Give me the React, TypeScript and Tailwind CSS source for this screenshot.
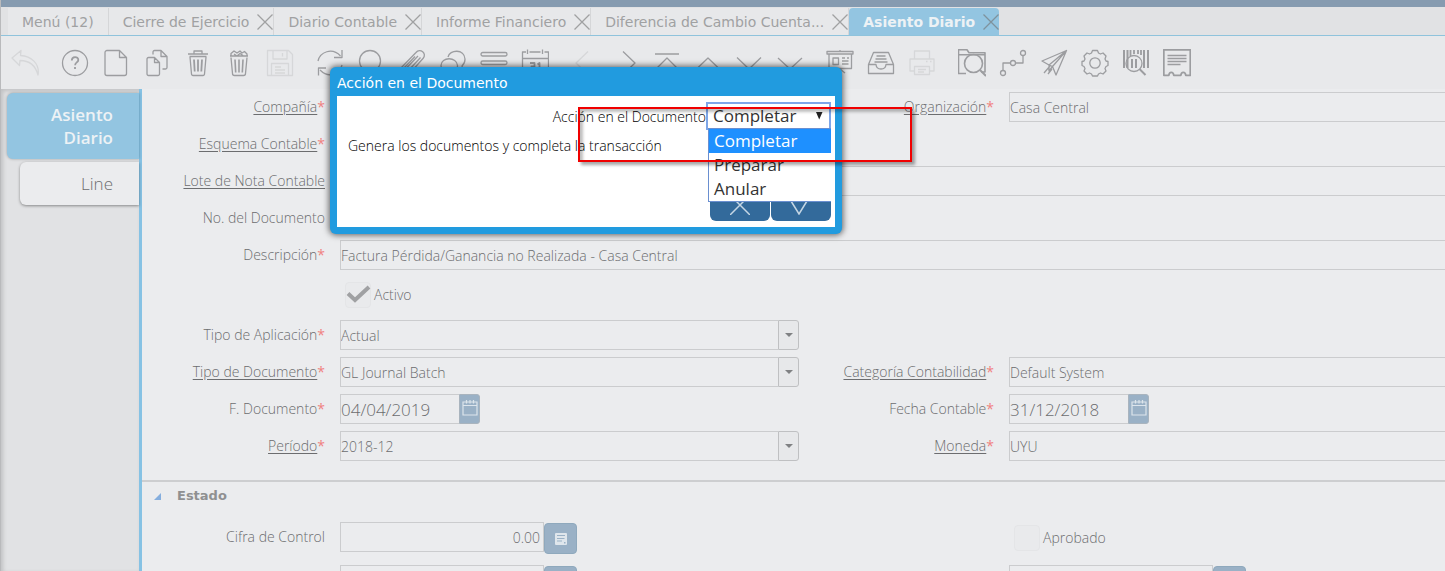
import React, { useState } from "react";

const icons: Record<string, React.ReactNode> = {
  undo: (
    <path d="M10 1.500 1 9l7.500 7.500.5-5c9 0 15.500 5 18 14.500C29 14.500 20 7 9.500 6.500Z" />
  ),
  help: (
    <>
      <circle cx="14" cy="14" r="12.500" />
      <path strokeWidth="1.800" d="M10.800 11.500c0-4.500 6.500-4.300 6.500-.6 0 2.500-3.200 2.600-3.200 5.300M14 18v2" />
    </>
  ),
  file: (
    <path d="M5 1.500h12.500l7 7V24.500a2 2 0 0 1-2 2h-17.500a2 2 0 0 1-2-2v-21a2 2 0 0 1 2-2ZM17.500 1.500v7h7" />
  ),
  copy: (
    <>
      <path d="M5.500 8.500h6l5 5v11.500a1.500 1.500 0 0 1-1.500 1.500H5.500A1.500 1.500 0 0 1 4 25V10a1.500 1.500 0 0 1 1.500-1.500M11.500 8.500v5h5" />
      <path d="M10 5.500V3a1.500 1.500 0 0 1 1.500-1.500H18l6 6v11a1.500 1.500 0 0 1-1.500 1.500H19.500M18 1.500v6h6" />
    </>
  ),
  trash: (
    <>
      <path d="M4 5h20M5.500 7.500h17M10 4.500V2h8v2.500M6 8l1.500 17a1.500 1.500 0 0 0 1.500 1.500h10a1.500 1.500 0 0 0 1.500-1.500L22 8" />
      <path d="M10 10.500l.7 12M14 10.500v12M18 10.500l-.7 12" strokeWidth="1.800" />
    </>
  ),
  trashFull: (
    <>
      <path d="M5 7h18M6 7V4.500l3-2.500 3 2 3-2 2 2 2.500-1.500L22 5v2M9 5l3 2 3-2.500 3 2M6 8.500l1.500 16a2 2 0 0 0 2 2h9a2 2 0 0 0 2-2l1.500-16" />
      <path d="M10 10.500l.7 13M14 10.500v13M18 10.500l-.7 13" strokeWidth="1.600" />
    </>
  ),
  save: (
    <path d="M1.500 1.500h21l4 4v21h-25ZM7 1.500V10h14V1.500M16.500 4v3.500M5.500 26.500v-12h17v12M9 18h6M9 21h10M9 24h10" />
  ),
  refresh: (
    <>
      <path d="M2 12C4 3 16-2 24.500 7M26 16c-2 9-13 14-22 5" />
      <path d="M26 1v7.500h-8M2.500 26.500V19H10" />
    </>
  ),
  search: (
    <>
      <circle cx="13" cy="12" r="10.500" />
      <path d="m20.500 20 6 6.500" />
    </>
  ),
  clip: (
    <path d="M2 20 18 3.500c4-5 11.500 1 7 6L12 24c-3 3-7-.5-4.500-4L20 7M5 20 17 7.500M10 22 22.500 8.500" />
  ),
  chat: (
    <>
      <path d="M2 16.500c0-9 16-9 16.500 0 .5 7-8 9-11.500 7.500L4 26v-3c-1.500-1.500-2-3.500-2-6.500Z" />
      <path d="M9 8c1.500-7.500 16.500-8.500 17 2 .2 3.500-1.500 5.500-3 7l1 4-4-2" />
    </>
  ),
  list: (
    <>
      <rect x="1" y="3.500" width="26" height="3.500" rx="1.700" />
      <rect x="1" y="12" width="26" height="3.500" rx="1.700" />
      <rect x="1" y="20.500" width="26" height="3.500" rx="1.700" />
    </>
  ),
  calendar: (
    <>
      <path d="M5 3H1.500v24h26V3H23.500M8.500 3h11M1.500 9.500h26M6.500.5V5M21.500.5V5" />
      <path strokeWidth="1.800" d="M9 14h4.500v3.500H10.500h3V22H9M18.500 22v-8l-2 1.500" />
    </>
  ),
  left: <path d="M17 2.500 5 14l12 11.500" />,
  right: <path d="m11 2.500 12 11.500-12 11.500" />,
  first: <path d="M2 5h24M2 21 14 9l12 12" />,
  up: <path d="M2 20.500 14 9l12 11.500" />,
  down: <path d="m2 8.500 12 11.500L26 8.500" />,
  last: <path d="m2 9 12 11L26 9M2 24.500h24" />,
  report: (
    <>
      <path d="M1 2.500h26v2.500H1ZM3 5.500V19.500h22.500V5.500M14 1v1.500M9 24l5-4 5 4" />
      <path d="M7 9h5.500v6.500H7ZM16 9h3M16 12h6.500M16 15h6.500M21 9h2" />
    </>
  ),
  inbox: (
    <>
      <path d="M1.500 15.500 6.500 3.500h15l5 12v9h-25ZM1.500 15.500H9c.5 6 9.500 6 10 0h7.500" />
      <path d="M9.500 7h9M8.500 10h11M7.500 13h13" />
    </>
  ),
  print: (
    <path d="M6.500 10V2h15v8M6.500 22H2V10h24v12h-4.500M6.500 17.500h15v8h-15ZM10 20.500h8M10 23h6M18 12.500h1.500M22 12.500h1.500" />
  ),
  folderSearch: (
    <>
      <path d="M8 24.500H.5V.8H9l2 3h16V23h-4M.5 5.800h26.500" strokeWidth="1.600" />
      <circle cx="15.500" cy="14.500" r="9" strokeWidth="1.600" />
      <path d="m22 21 6 6" strokeWidth="2" />
    </>
  ),
  workflow: (
    <>
      <circle cx="4" cy="24" r="2.500" />
      <circle cx="14" cy="14" r="2.500" />
      <circle cx="24" cy="4" r="2.500" />
      <path d="M4 21.500V14h7.500M16.500 14H24V6.500" />
    </>
  ),
  send: (
    <path d="M26.500 1.500 2 12l7 4L26.500 1.500 16 26l-3.500-8.500L9 16v6l3.500-4.500 14-16M4 24l6-7M8 25l4-5" />
  ),
  gear: (
    <>
      <path d="M11.500 1.500h5l1 2.500 2 1 2.500-1 3 3-1 3 1 2 2 .5v4l-2 1-1 2 1 2.500-3 3-2.500-1-2 1-1 2h-5l-1-2-2-1-2.500 1-3-3 1-2.500-1-2-2-1v-4l2-.5 1-2-1-3 3-3 2.500 1 2-1Z" />
      <circle cx="14" cy="14" r="5.200" />
    </>
  ),
  barcode: (
    <>
      <path d="M2 1v18M5.500 1v18" strokeWidth="2" />
      <path d="M8.500 1v6M12 1v4M16 1v4M19 1v5" strokeWidth="1.800" />
      <path d="M22 1v18M26 1v18" strokeWidth="2" />
      <circle cx="12" cy="14.500" r="8" />
      <path d="M10 10v9M14 10v9" strokeWidth="2" />
      <path d="m17.500 20 6 6" strokeWidth="2" />
    </>
  ),
  receipt: (
    <>
      <path strokeWidth="1.800" d="M.8.8h26.500v25.500h-4.500c-.5-4-4.500-4-5 0h-7c-.5-4-4.500-4-5 0H.8Z" />
      <path strokeWidth="1.600" d="M4.500 6.500h19M4.500 9.500h19M4.500 12.500h19M4.500 15.500h13" />
    </>
  ),
};

type Tool = { name: string; label: string; faded?: boolean };

const toolGroups: Tool[][] = [
  [{ name: "undo", label: "Deshacer", faded: true }],
  [
    { name: "help", label: "Ayuda" },
    { name: "file", label: "Nuevo" },
    { name: "copy", label: "Copiar" },
    { name: "trash", label: "Eliminar" },
    { name: "trashFull", label: "Eliminar selección" },
    { name: "save", label: "Guardar", faded: true },
  ],
  [
    { name: "refresh", label: "Refrescar" },
    { name: "search", label: "Buscar" },
    { name: "clip", label: "Adjunto" },
    { name: "chat", label: "Chat" },
    { name: "list", label: "Vista de lista" },
    { name: "calendar", label: "Calendario" },
  ],
  [
    { name: "left", label: "Padre", faded: true },
    { name: "right", label: "Detalle" },
    { name: "first", label: "Primero" },
    { name: "up", label: "Anterior" },
    { name: "down", label: "Siguiente" },
    { name: "last", label: "Último" },
  ],
  [
    { name: "report", label: "Informe" },
    { name: "inbox", label: "Archivo" },
    { name: "print", label: "Imprimir", faded: true },
  ],
  [
    { name: "folderSearch", label: "Zoom" },
    { name: "workflow", label: "Flujo de trabajo" },
    { name: "send", label: "Solicitudes" },
    { name: "gear", label: "Proceso" },
    { name: "barcode", label: "Información de producto" },
    { name: "receipt", label: "Cerrar período" },
  ],
];

const tabs = [
  "Cierre de Ejercicio",
  "Diario Contable",
  "Informe Financiero",
  "Diferencia de Cambio Cuenta...",
];

function Cross() {
  return (
    <svg viewBox="0 0 16 16" className="size-4" fill="none" stroke="currentColor" strokeWidth="1.300">
      <path d="M.5.5l15 15M15.500.5l-15 15" />
    </svg>
  );
}

function WindowTabs() {
  return (
    <nav className="flex h-[29px] shrink-0 border-b border-[#8fc3dc] bg-[#e1e2e4] pl-[7px] pt-px font-['DejaVu_Sans',sans-serif] text-sm text-[#a0a1a2]">
      <button className="border-r border-[#d5d6d8] bg-[#e7e8ea] px-3.5">Menú (12)</button>
      {tabs.map((t) => (
        <div key={t} className="flex items-center gap-2 border-r border-[#d5d6d8] bg-[#e7e8ea] pl-3.5">
          <button className="whitespace-nowrap">{t}</button>
          <button aria-label={`Cerrar ${t}`}>
            <Cross />
          </button>
        </div>
      ))}
      <div className="flex items-center gap-2 rounded-t-sm bg-[#93c5e1] pl-3.5">
        <button className="whitespace-nowrap font-bold text-[#edf2f5]">Asiento Diario</button>
        <button aria-label="Cerrar Asiento Diario" className="text-[#7f929d]">
          <Cross />
        </button>
      </div>
    </nav>
  );
}

function Toolbar() {
  return (
    <div className="flex h-[53px] shrink-0 gap-[17px] bg-[#e8e9eb] pl-[7px]">
      {toolGroups.map((group, i) => (
        <div key={i} className="flex gap-2">
          {group.map((t) => (
            <button
              key={t.name}
              aria-label={t.label}
              className={`flex w-[33px] shrink-0 items-center justify-center ${t.faded ? "text-[#d6d7d9]" : "text-[#9c9da0]"}`}
            >
              <svg
                viewBox="0 0 28 28"
                className="size-7 shrink-0"
                fill="none"
                stroke="currentColor"
                strokeWidth="1.300"
                strokeLinejoin="round"
              >
                {icons[t.name]}
              </svg>
            </button>
          ))}
        </div>
      ))}
    </div>
  );
}

type LabelProps = { id: string; text: string; link?: boolean; required?: boolean };

function FieldLabel({ id, text, link, required }: LabelProps) {
  return (
    <label htmlFor={id} className="flex h-[30px] items-center justify-end whitespace-nowrap pr-[15px]">
      <span className={link ? "underline underline-offset-2" : ""}>{text}</span>
      {required && <span className="font-normal text-[#f08080]">*</span>}
    </label>
  );
}

const box = "h-[30px] min-w-0 border border-[#cbccce] bg-transparent outline-none";

function TextField({ id, value, wide }: { id: string; value: string; wide?: boolean }) {
  return (
    <input
      id={id}
      defaultValue={value}
      className={`${box} w-full border-r-0 ${wide ? "col-span-3" : ""}`}
    />
  );
}

function Combo({ id, value }: { id: string; value: string }) {
  return (
    <div className="flex">
      <input id={id} defaultValue={value} className={`${box} flex-1 border-r-0`} />
      <button
        aria-label="Abrir lista"
        className="flex w-[21px] items-center justify-center rounded-r-[3px] border border-[#bfc0c2] bg-[#e7e8ea]"
      >
        <svg viewBox="0 0 8 4" className="h-1 w-2" fill="#808183">
          <path d="M0 0h8L4 4Z" />
        </svg>
      </button>
    </div>
  );
}

function DateField({ id, value }: { id: string; value: string }) {
  return (
    <div className="flex w-[140px]">
      <input id={id} defaultValue={value} className={`${box} flex-1 border-r-0 text-[17px]`} />
      <button
        aria-label="Elegir fecha"
        className="flex w-[21px] items-start justify-center rounded-r-[3px] border border-[#a9b4be] bg-[#9ab1c6] pt-[5px]"
      >
        <svg viewBox="0 0 16 16" className="size-4" fill="none" stroke="#dde5ec" strokeWidth="1.200">
          <path d="M1 2h14v13H1ZM1 5.500h14M4.500 0v3.500M8 0v3.500M11.500 0v3.500" />
        </svg>
      </button>
    </div>
  );
}

function NumberField({ id, value }: { id: string; value: string }) {
  return (
    <div className="flex">
      <input id={id} defaultValue={value} className={`${box} w-[204px] pr-[3px] text-right`} />
      <button
        aria-label="Calculadora"
        className="mt-px flex h-[31px] w-[33px] items-center justify-center rounded border border-[#8fa9bd] bg-[#9ab1c6]"
      >
        <svg viewBox="0 0 12 12" className="size-3">
          <path fill="#dfe6ec" d="M1 0h10a1 1 0 0 1 1 1v10a1 1 0 0 1-1 1H1a1 1 0 0 1-1-1V1a1 1 0 0 1 1-1Z" />
          <path fill="#9ab1c6" d="M2 2h8v1H2ZM2 5h7.500v1H2ZM2 7.500h5v1H2ZM9 9h1.500v1.500H9Z" />
        </svg>
      </button>
    </div>
  );
}

function CheckField({ id, text, initial }: { id: string; text: string; initial: boolean }) {
  const [on, setOn] = useState(initial);
  return (
    <div className="flex items-center gap-[3px] pl-[5px]">
      <span className="grid size-[26px]">
        <input
          id={id}
          type="checkbox"
          checked={on}
          onChange={() => setOn(!on)}
          className="col-start-1 row-start-1 size-[26px] appearance-none rounded-sm border border-[#e4e5e7] bg-[#e9eaec]"
        />
        {on && (
          <svg
            viewBox="0 0 26 26"
            className="pointer-events-none col-start-1 row-start-1 size-[26px]"
            fill="none"
            stroke="#a0a1a3"
            strokeWidth="4"
          >
            <path d="m3 11.500 7 6.500L24 5" />
          </svg>
        )}
      </span>
      <label htmlFor={id}>{text}</label>
    </div>
  );
}

const gridCols = "grid grid-cols-[198px_minmax(0,459fr)_210px_minmax(0,436fr)] gap-y-[7px]";

function JournalForm() {
  return (
    <form className="min-w-0 flex-1 overflow-hidden bg-[#ebecee] text-sm font-light text-[#6c6d6f]">
      <div className={`${gridCols} border-b-2 border-[#cdced0] pb-[19px] pt-[3px]`}>
        <FieldLabel id="compania" text="Compañía" link required />
        <Combo id="compania" value="" />
        <FieldLabel id="organizacion" text="Organización" link required />
        <TextField id="organizacion" value="Casa Central" />

        <FieldLabel id="esquema" text="Esquema Contable" link required />
        <Combo id="esquema" value="" />
        <span className="col-span-2" />

        <FieldLabel id="lote" text="Lote de Nota Contable" link />
        <TextField id="lote" value="" wide />

        <FieldLabel id="numero" text="No. del Documento" />
        <TextField id="numero" value="" />
        <span className="col-span-2" />

        <FieldLabel id="descripcion" text="Descripción" required />
        <TextField id="descripcion" value="Factura Pérdida/Ganancia no Realizada - Casa Central" wide />

        <div className="col-span-3 col-start-2 flex h-9">
          <CheckField id="activo" text="Activo" initial />
        </div>

        <FieldLabel id="aplicacion" text="Tipo de Aplicación" required />
        <Combo id="aplicacion" value="Actual" />
        <span className="col-span-2" />

        <FieldLabel id="tipo" text="Tipo de Documento" link required />
        <Combo id="tipo" value="GL Journal Batch" />
        <FieldLabel id="categoria" text="Categoría Contabilidad" link required />
        <TextField id="categoria" value="Default System" />

        <FieldLabel id="fdocumento" text="F. Documento" required />
        <DateField id="fdocumento" value="04/04/2019" />
        <FieldLabel id="fcontable" text="Fecha Contable" required />
        <DateField id="fcontable" value="31/12/2018" />

        <FieldLabel id="periodo" text="Período" link required />
        <Combo id="periodo" value="2018-12" />
        <FieldLabel id="moneda" text="Moneda" link required />
        <TextField id="moneda" value="UYU" />
      </div>

      <button
        type="button"
        className="flex h-7 items-center gap-4 pl-3 font-['DejaVu_Sans',sans-serif] text-[13px] font-bold text-[#8f9091]"
      >
        <svg viewBox="0 0 7 7" className="size-[7px]" fill="#85aede">
          <path d="M7 0v7H0Z" />
        </svg>
        Estado
      </button>

      <div className={`${gridCols} pt-3`}>
        <FieldLabel id="cifra" text="Cifra de Control" />
        <NumberField id="cifra" value="0.00" />
        <span />
        <CheckField id="aprobado" text="Aprobado" initial={false} />
        <span className="mt-1" />
        <div className="mt-1">
          <NumberField id="debito" value="" />
        </div>
        <span />
        <div className="mt-1">
          <NumberField id="credito" value="" />
        </div>
      </div>
    </form>
  );
}

function ActionDialog() {
  const options = ["Completar", "Preparar", "Anular"];
  const [value, setValue] = useState("Completar");
  return (
    <div
      role="dialog"
      aria-labelledby="dialog-title"
      className="absolute left-[329px] top-[67px] w-[512px] rounded-md bg-[#219bdf] px-[7px] pb-[7px] shadow-[0_0_6px_1px_rgba(0,0,0,0.6)]"
    >
      <h2
        id="dialog-title"
        className="flex h-[29px] items-center pt-0.5 font-['DejaVu_Sans',sans-serif] text-sm text-white"
      >
        Acción en el Documento
      </h2>
      <div className="flex h-[131px] flex-col bg-white pb-[6px] pr-1 pt-1.5 text-sm font-light text-black">
        <div className="flex items-center justify-end">
          <label htmlFor="accion" className="pt-0.5">Acción en el Documento</label>
          <div className="relative">
            <select
              id="accion"
              value={value}
              onChange={(e) => setValue(e.target.value)}
              className="h-7 w-[125px] appearance-none border-2 border-[#7ea6e8] bg-white pl-[5px] text-[17px] font-normal text-[#333] outline-none"
            >
              {options.map((o) => (
                <option key={o}>{o}</option>
              ))}
            </select>
            <svg viewBox="0 0 8 8" className="pointer-events-none absolute right-2 top-2.5 size-2" fill="#222">
              <path d="M1 0h6.500L4.200 7.500Z" />
            </svg>
            <ul
              role="listbox"
              aria-label="Opciones"
              className="absolute right-0 top-[26px] w-[123px] border border-r-0 border-[#6a8fd0] bg-white text-[17px] font-normal leading-6 text-[#333]"
            >
              {options.map((o) => (
                <li
                  key={o}
                  role="option"
                  aria-selected={o === value}
                  onClick={() => setValue(o)}
                  className={`pl-[5px] ${o === value ? "bg-[#1e90ff] text-white" : ""}`}
                >
                  {o}
                </li>
              ))}
            </ul>
          </div>
        </div>
        <p className="pl-[11px] pt-1.5">Genera los documentos y completa la transacción</p>
        <div className="mt-auto flex justify-end gap-px">
          <button aria-label="Cancelar" className="flex h-8 w-[60px] items-end justify-center rounded-md bg-[#336a9b] pb-1.5">
            <svg viewBox="0 0 20 20" className="size-5" fill="none" stroke="#c5d6e4" strokeWidth="1.500">
              <path d="m0 0 20 20M20 0 0 20" />
            </svg>
          </button>
          <button aria-label="Aceptar" className="flex h-8 w-[60px] items-end justify-center rounded-md bg-[#336a9b] pb-1.5 pr-1">
            <svg viewBox="0 0 20 20" className="size-5" fill="none" stroke="#c5d6e4" strokeWidth="1.500">
              <path d="m2 6 8 13 8-13" />
            </svg>
          </button>
        </div>
      </div>
    </div>
  );
}

export default function App() {
  return (
    <div className="relative flex h-screen flex-col overflow-hidden border-l border-[#b9babc] bg-[#e1e2e4] font-['Open_Sans',sans-serif]">
      <header className="h-[7px] shrink-0 bg-[#869bb0]" />
      <WindowTabs />
      <Toolbar />
      <main className="flex min-h-0 flex-1">
        <aside className="flex w-[141px] shrink-0 flex-col items-end gap-[3px] border-r-[3px] border-[#86c2e4] pt-1 text-right leading-[23px] shadow-[inset_2px_2px_4px_rgba(0,0,0,0.15)]">
          <button className="w-[132px] rounded-l-md bg-[#93c5e1] py-2.5 pl-10 pr-[26px] text-right text-[17px] font-semibold leading-[23px] text-[#edf2f5] shadow-[0_0_3px_rgba(0,0,0,0.3)]">
            Asiento Diario
          </button>
          <button className="w-[119px] rounded-l-md bg-[#ebecee] py-2.5 pr-[26px] text-right text-[17px] font-light leading-[23px] text-[#6c6d6f] shadow-[0_1px_3px_rgba(0,0,0,0.4)]">
            Line
          </button>
        </aside>
        <JournalForm />
      </main>
      <ActionDialog />
      <div className="pointer-events-none absolute left-[577px] top-[107px] h-[55px] w-[334px] border-2 border-[#f00000] shadow-[3px_3px_3px_rgba(0,0,0,0.35),inset_3px_3px_3px_rgba(0,0,0,0.25)]" />
    </div>
  );
}
